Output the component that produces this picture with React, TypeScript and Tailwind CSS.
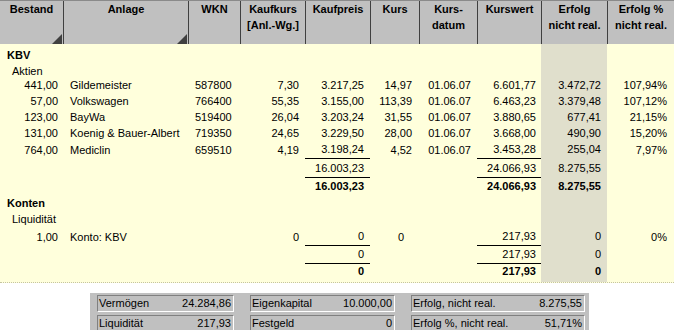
import clsx from 'clsx'
import type { ReactNode } from 'react'

const GRID = 'grid grid-cols-[63px_125px_52px_65px_65px_49px_58px_64px_66px_67px]'

const ALIGN = [
  'justify-end pr-[5px]',
  'justify-start pl-[7px]',
  'justify-start pl-[7px]',
  'justify-end pr-[6px]',
  'justify-end pr-[6px]',
  'justify-end pr-[7px]',
  'justify-end pr-[6px]',
  'justify-end pr-[5px]',
  'justify-end pr-[6px]',
  'justify-end pr-[7px]',
]

const HEADERS: { label: string[]; marker?: boolean }[] = [
  { label: ['Bestand'], marker: true },
  { label: ['Anlage'], marker: true },
  { label: ['WKN'] },
  { label: ['Kaufkurs', '[Anl.-Wg.]'] },
  { label: ['Kaufpreis'] },
  { label: ['Kurs'] },
  { label: ['Kurs-', 'datum'] },
  { label: ['Kurswert'] },
  { label: ['Erfolg', 'nicht real.'] },
  { label: ['Erfolg %', 'nicht real.'] },
]

const AKTIEN = [
  ['441,00', 'Gildemeister', '587800', '7,30', '3.217,25', '14,97', '01.06.07', '6.601,77', '3.472,72', '107,94%'],
  ['57,00', 'Volkswagen', '766400', '55,35', '3.155,00', '113,39', '01.06.07', '6.463,23', '3.379,48', '107,12%'],
  ['123,00', 'BayWa', '519400', '26,04', '3.203,24', '31,55', '01.06.07', '3.880,65', '677,41', '21,15%'],
  ['131,00', 'Koenig & Bauer-Albert', '719350', '24,65', '3.229,50', '28,00', '01.06.07', '3.668,00', '490,90', '15,20%'],
  ['764,00', 'Mediclin', '659510', '4,19', '3.198,24', '4,52', '01.06.07', '3.453,28', '255,04', '7,97%'],
]

const UNDER = [4, 7, 8]

function Row({
  cells,
  h,
  bold,
  lines = [],
  pad,
}: {
  cells: (ReactNode | null)[]
  h: string
  bold?: boolean
  lines?: number[]
  pad?: string
}) {
  return (
    <div className={clsx(GRID, h, bold && 'font-bold')}>
      {cells.map((c, i) => (
        <div
          key={i}
          className={clsx(
            'flex items-center whitespace-nowrap',
            ALIGN[i],
            pad,
            i === 8 && 'bg-[#e0dfcc]',
            lines.includes(i) && 'border-b border-black'
          )}
        >
          {c}
        </div>
      ))}
    </div>
  )
}

function Section({ label, h, bold }: { label: string; h: string; bold?: boolean }) {
  return (
    <div className={clsx(GRID, h)}>
      <div
        className={clsx(
          'col-span-8 flex items-center whitespace-nowrap',
          bold ? 'font-bold pl-[7px]' : 'pl-[12px]'
        )}
      >
        {label}
      </div>
      <div className="bg-[#e0dfcc]" />
      <div />
    </div>
  )
}

function Marker() {
  return (
    <svg width="10" height="10" viewBox="0 0 10 10" className="mt-auto self-end mr-[1px]">
      <polygon points="10,0 10,10 0,10" fill="#404040" />
    </svg>
  )
}

function SumBox({ label, value }: { label: string; value: string }) {
  return (
    <div className="flex h-[17px] items-center justify-between border-t border-l border-t-[#808080] border-l-[#808080] border-b border-r border-b-white border-r-white pl-[1px] pr-[2px] whitespace-nowrap">
      <span>{label}</span>
      <span>{value}</span>
    </div>
  )
}

export default function App() {
  return (
    <div className="w-[674px] h-[330px] overflow-hidden bg-white text-[11px] text-black font-['Liberation_Sans',Arial,sans-serif]">
      {/* column header */}
      <div className={clsx(GRID, 'h-[44px] bg-[#c0c0c0] border-t border-[#8a8a8a] font-bold')}>
        {HEADERS.map((col, i) => (
          <div
            key={i}
            className={clsx('flex flex-col items-center leading-[16px]', i > 0 && 'border-l border-[#404040]')}
          >
            {col.label.map((l) => (
              <span key={l} className="whitespace-nowrap">
                {l}
              </span>
            ))}
            {col.marker && <Marker />}
          </div>
        ))}
      </div>

      {/* body */}
      <div className="bg-[#ffffdc] border-b border-dotted border-[#c4c4a0]">
        <div className={clsx(GRID, 'h-[3px]')}>
          <div className="col-span-8" />
          <div className="bg-[#e0dfcc]" />
        </div>
        <Section label="KBV" h="h-[16px]" bold />
        <Section label="Aktien" h="h-[14px]" />
        {AKTIEN.map((r, i) => (
          <Row key={r[1]} cells={r} h="h-[16px]" lines={i === AKTIEN.length - 1 ? UNDER : []} />
        ))}
        <Row
          cells={[null, null, null, null, '16.003,23', null, null, '24.066,93', '8.275,55', null]}
          h="h-[20px]"
          pad="pt-[3px]"
          lines={UNDER}
        />
        <Row
          cells={[null, null, null, null, '16.003,23', null, null, '24.066,93', '8.275,55', null]}
          h="h-[18px]"
          bold
        />
        <Section label="Konten" h="h-[15px]" bold />
        <Section label="Liquidität" h="h-[18px]" />
        <Row
          cells={[
            '1,00',
            'Konto: KBV',
            null,
            '0',
            '0',
            <span className="mr-[8px]">0</span>,
            null,
            '217,93',
            '0',
            '0%',
          ]}
          h="h-[16px]"
          lines={UNDER}
        />
        <Row
          cells={[null, null, null, null, '0', null, null, '217,93', '0', null]}
          h="h-[18px]"
          pad="pt-[2px]"
          lines={UNDER}
        />
        <Row cells={[null, null, null, null, '0', null, null, '217,93', '0', null]} h="h-[18px]" bold />
        <div className={clsx(GRID, 'h-[2px]')}>
          <div className="col-span-8" />
          <div className="bg-[#e0dfcc]" />
        </div>
      </div>

      {/* summary panel */}
      <div className="mt-[10px] ml-[90px] w-[499px] bg-[#c0c0c0] pt-[2px] pl-[7px] pb-[2px]">
        <div className="grid grid-cols-[137px_145px_174px] gap-x-[16px] gap-y-[3px]">
          <SumBox label="Vermögen" value="24.284,86" />
          <SumBox label="Eigenkapital" value="10.000,00" />
          <SumBox label="Erfolg, nicht real." value="8.275,55" />
          <SumBox label="Liquidität" value="217,93" />
          <SumBox label="Festgeld" value="0" />
          <SumBox label="Erfolg %, nicht real." value="51,71%" />
        </div>
      </div>
    </div>
  )
}
